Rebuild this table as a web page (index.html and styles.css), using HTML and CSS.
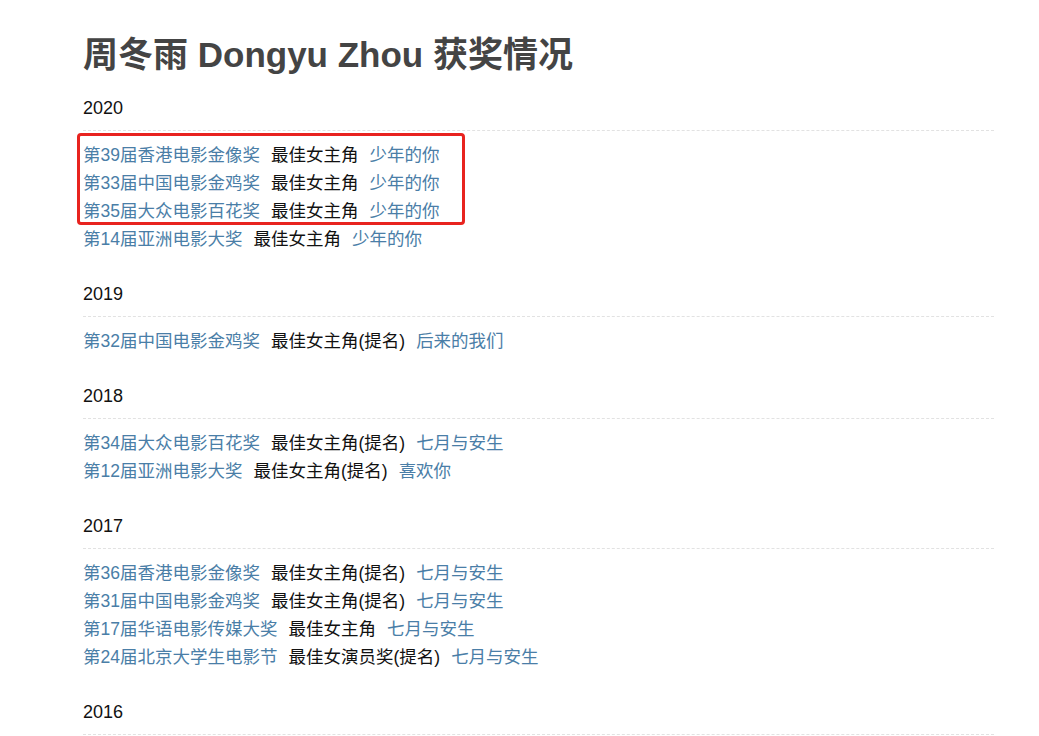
FILE: index.html
```html
<!DOCTYPE html>
<html lang="zh-CN">
<head>
    <meta charset="UTF-8">
    <meta name="viewport" content="width=device-width, initial-scale=1.0">
    <title>周冬雨 Dongyu Zhou 获奖情况</title>
    <link rel="stylesheet" href="styles.css">
</head>
<body>
    <div class="container">
        <h1>周冬雨 Dongyu Zhou 获奖情况</h1>

        <div class="year">
            <h3>2020</h3>
            <ul class="awards">
                <li class="marked">
                    <ul class="awards">
                        <li><a href="#">第39届香港电影金像奖</a><span>最佳女主角</span><a href="#">少年的你</a></li>
                        <li><a href="#">第33届中国电影金鸡奖</a><span>最佳女主角</span><a href="#">少年的你</a></li>
                        <li><a href="#">第35届大众电影百花奖</a><span>最佳女主角</span><a href="#">少年的你</a></li>
                    </ul>
                </li>
                <li><a href="#">第14届亚洲电影大奖</a><span>最佳女主角</span><a href="#">少年的你</a></li>
            </ul>
        </div>

        <div class="year">
            <h3>2019</h3>
            <ul class="awards">
                <li><a href="#">第32届中国电影金鸡奖</a><span>最佳女主角(提名)</span><a href="#">后来的我们</a></li>
            </ul>
        </div>

        <div class="year">
            <h3>2018</h3>
            <ul class="awards">
                <li><a href="#">第34届大众电影百花奖</a><span>最佳女主角(提名)</span><a href="#">七月与安生</a></li>
                <li><a href="#">第12届亚洲电影大奖</a><span>最佳女主角(提名)</span><a href="#">喜欢你</a></li>
            </ul>
        </div>

        <div class="year">
            <h3>2017</h3>
            <ul class="awards">
                <li><a href="#">第36届香港电影金像奖</a><span>最佳女主角(提名)</span><a href="#">七月与安生</a></li>
                <li><a href="#">第31届中国电影金鸡奖</a><span>最佳女主角(提名)</span><a href="#">七月与安生</a></li>
                <li><a href="#">第17届华语电影传媒大奖</a><span>最佳女主角</span><a href="#">七月与安生</a></li>
                <li><a href="#">第24届北京大学生电影节</a><span>最佳女演员奖(提名)</span><a href="#">七月与安生</a></li>
            </ul>
        </div>

        <div class="year">
            <h3>2016</h3>
        </div>
    </div>
</body>
</html>
```

FILE: styles.css
```css
body {
    font-family: "Liberation Sans", Arial, "Noto Sans CJK SC", sans-serif;
    margin: 0;
    padding: 0;
    background-color: #ffffff;
    color: #111111;
}

.container {
    width: 911px;
    margin-left: 83px;
    padding-top: 35px;
}

h1 {
    margin: 0;
    font-size: 35px;
    line-height: 40px;
    font-weight: bold;
    color: #444444;
}

.year {
    margin-top: 20px;
}

.year + .year {
    margin-top: 28px;
}

h3 {
    margin: 0;
    font-size: 18px;
    line-height: 27px;
    font-weight: normal;
    padding-bottom: 8px;
    border-bottom: 1px dashed #e2e2e2;
}

.awards {
    list-style: none;
    margin: 0;
    padding: 0;
}

.year > .awards {
    margin-top: 10px;
}

.awards li {
    font-size: 17.5px;
    line-height: 28px;
}

.awards a {
    color: #4a7ea7;
    text-decoration: none;
}

.awards span {
    margin: 0 11px;
}

/* red annotation box around the three 2020 wins */
.marked {
    position: relative;
}

.marked::after {
    content: "";
    position: absolute;
    left: -6px;
    top: -8px;
    width: 382px;
    height: 86px;
    border: 3px solid #e8231f;
    border-radius: 4px;
}
```
